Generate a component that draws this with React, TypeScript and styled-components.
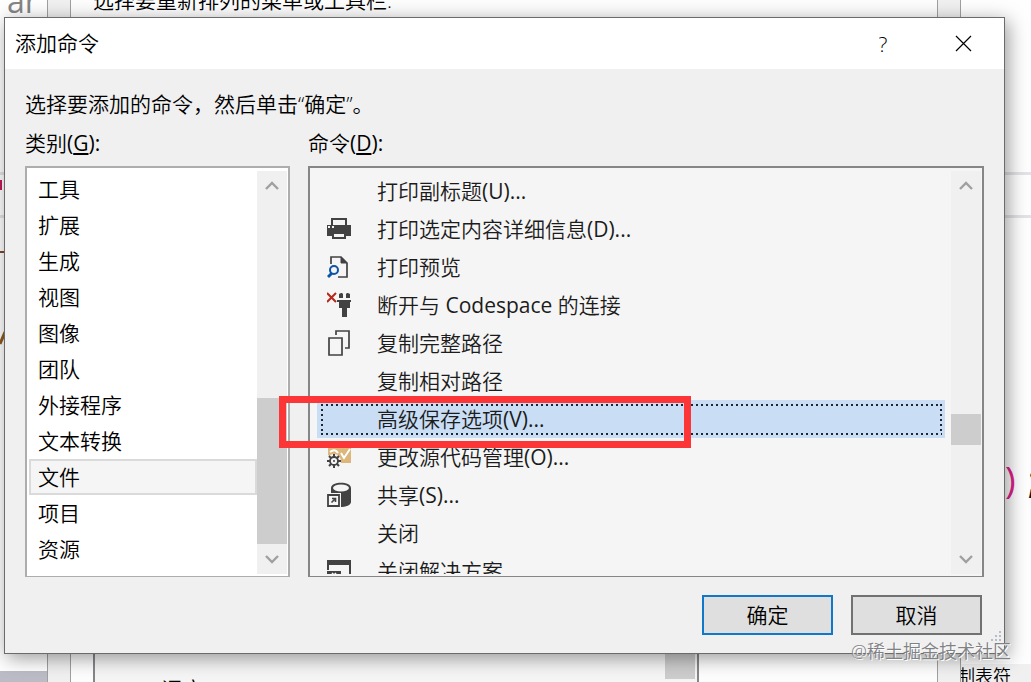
import React from 'react';
import styled, { createGlobalStyle, css } from 'styled-components';

const GlobalStyle = createGlobalStyle`
  *, *::before, *::after { box-sizing: border-box; }
  body {
    margin: 0;
    background: #fefefe;
    color: #000;
    font: 350 21px/28px "Open Sans", "Noto Sans CJK SC", sans-serif;
  }
  ul { list-style: none; margin: 0; padding: 0; }
  p, h1 { margin: 0; font-size: inherit; font-weight: inherit; }
  svg { display: block; }
`;

const Desktop = styled.div`
  position: relative;
  min-height: 100vh;
  padding: 17px 26px 28px 4px;
  overflow: hidden;
`;

/* Windows lying behind the dialog */

const Backdrop = styled.div`
  position: absolute;
  inset: 0;
  display: flex;
`;

const EditorEdge = styled.div<{ $side: 'left' | 'right' }>`
  flex: none;
  display: flex;
  flex-direction: column;
  width: ${(p) => (p.$side === 'left' ? 47 : 70)}px;
  overflow: hidden;
`;

const EditorHeading = styled.p`
  height: 172px;
  padding-left: 7px;
  color: #858585;
  font: 400 32px/2px "Open Sans", sans-serif;
`;

const CurrentLine = styled.div`
  flex: none;
  height: 46px;
  border: solid #e3e3e7;
  border-width: 3px 0;
`;

const CodeMark = styled.div`
  width: 2px;
  height: 10px;
  margin-top: 5px;
  background: #c2185b;
`;

const EditorCode = styled.div`
  flex: 1;
`;

const CodeSliver = styled.svg`
  margin-top: 32px;
`;

const CodeTail = styled(EditorCode)`
  padding: 242px 0 0 44px;
  white-space: nowrap;
  font: 400 36px/40px "Open Sans", sans-serif;
  color: #111;
`;

const Paren = styled.span`
  color: #e0218a;
  margin-right: 12px;
`;

const StatusStrip = styled.div`
  flex: none;
  height: 11px;
  background: #bcbcc6;
`;

const TabText = styled.div`
  flex: none;
  height: 18px;
  background: #f0f0f0;
  line-height: 24px;
  font-size: 18px;
  text-indent: -4px;
  overflow: hidden;
  white-space: nowrap;
`;

const CustomizeWindow = styled.div`
  flex: 1;
  display: flex;
  padding: 0 22px;
  background: #f0f0f0;
  border: solid #a0a0a0;
  border-width: 0 1px;
`;

const CustomizePanel = styled.div`
  flex: 1;
  display: flex;
  flex-direction: column;
  justify-content: space-between;
  padding: 0 0 0 22px;
  background: #fdfdfd;
  border: solid #a0a0a0;
  border-width: 0 1px;
  overflow: hidden;
`;

const CustomizeCaption = styled.p`
  margin-top: -14px;
`;

const CustomizeList = styled.div`
  display: flex;
  justify-content: space-between;
  width: 606px;
  height: 42px;
  background: #f5f5f5;
  border: solid #848688;
  border-width: 0 2px;
  padding-left: 66px;
  overflow: hidden;
`;

const ClippedItem = styled.span`
  padding-top: 35px;
`;

const BackThumb = styled.span`
  width: 30px;
  height: 39px;
  margin-right: 2px;
  background: #cdcdcd;
`;

/* Dialog */

const Dialog = styled.section`
  position: relative;
  background: #f0f0f0;
  border: 1px solid #6b6b6b;
  box-shadow: 3px 4px 18px rgba(0, 0, 0, 0.4);
`;

const TitleBar = styled.header`
  display: flex;
  align-items: center;
  height: 51px;
  padding: 0 1px 0 10px;
  background: #fff;
`;

const Title = styled.h1`
  flex: 1;
  padding-bottom: 2px;
`;

const CaptionButton = styled.button`
  display: flex;
  align-items: center;
  justify-content: center;
  width: 80px;
  height: 51px;
  padding: 0;
  border: 0;
  background: transparent;
  color: #000;
  font: 300 21px/28px "Open Sans", sans-serif;
`;

const Body = styled.div`
  padding: 21px 20px 18px;
`;

const Lists = styled.div`
  display: grid;
  grid-template-columns: 265px 1fr;
  column-gap: 18px;
  margin-top: 11px;
`;

const ListLabel = styled.p`
  margin-bottom: 9px;
`;

const ListBox = styled.div<{ $tone: 'plain' | 'active' }>`
  position: relative;
  display: flex;
  height: 411px;
  padding: 3px 1px 2px 2px;
  border: 2px solid;
  border-bottom-width: 1px;
  ${(p) =>
    p.$tone === 'plain'
      ? css`
          background: #fff;
          border-color: #adadad;
        `
      : css`
          background: #f5f5f5;
          border-color: #848688;
        `}
`;

const Options = styled.ul<{ $inset?: boolean }>`
  flex: 1;
  overflow: hidden;
  padding: ${(p) => (p.$inset ? '1px 6px 0 5px' : '0')};
`;

const CategoryOption = styled.li`
  height: 36px;
  padding-left: 7px;
  line-height: 32px;
  border: 2px solid transparent;

  &[aria-selected='true'] {
    background: #f5f5f5;
    border-color: #dadada;
  }
`;

const dots = '#1d2733 0 2px, transparent 2px 5px';

const CommandOption = styled.li`
  display: grid;
  grid-template-columns: 24px 1fr;
  column-gap: 26px;
  align-items: center;
  height: 38px;
  padding-left: 10px;
  line-height: 38px;
  color: #1c1c1c;

  &[aria-selected='true'] {
    background:
      repeating-linear-gradient(90deg, ${dots}) 4px 4px / calc(100% - 7px) 2px no-repeat,
      repeating-linear-gradient(90deg, ${dots}) 4px 33px / calc(100% - 7px) 2px no-repeat,
      repeating-linear-gradient(180deg, ${dots}) 4px 4px / 2px 30px no-repeat,
      repeating-linear-gradient(180deg, ${dots}) calc(100% - 3px) 4px / 2px 30px no-repeat,
      #c9def5;
  }
`;

const LatinRun = styled.span`
  font-weight: 400;
`;

const Scrollbar = styled.div`
  flex: none;
  display: flex;
  flex-direction: column;
  width: 30px;
  background: #f0f0f0;
`;

const ScrollButton = styled.button`
  display: flex;
  align-items: center;
  justify-content: center;
  height: 30px;
  padding: 0;
  border: 0;
  background: transparent;
`;

const Track = styled.div`
  flex: 1;
  display: flex;
  flex-direction: column;
`;

const Thumb = styled.div`
  flex: none;
  background: #cdcdcd;
`;

const Highlight = styled.div`
  position: absolute;
  left: -31px;
  top: 228px;
  width: 412px;
  height: 52px;
  border: 7px solid #fc3636;
  pointer-events: none;
`;

const Footer = styled.footer`
  display: flex;
  justify-content: flex-end;
  gap: 18px;
  margin-top: 18px;
  padding-right: 2px;
`;

const PushButton = styled.button<{ $primary?: boolean }>`
  width: 131px;
  height: 40px;
  padding: 0;
  border: 2px solid ${(p) => (p.$primary ? '#0f78c8' : '#6f7173')};
  background: #dfdfdf;
  color: #000;
  font: inherit;
`;

const Grip = styled.svg`
  position: absolute;
  right: 3px;
  bottom: 8px;
`;

const Watermark = styled.p`
  position: absolute;
  right: 20px;
  bottom: 18px;
  color: #7f8184;
  font-size: 18px;
  line-height: 26px;
  text-shadow: 1px 1px 0 #fff;
`;

/* Icons */

const PrinterIcon = () => (
  <svg width="24" height="24" viewBox="0 0 24 24" aria-hidden="true">
    <path d="M5 9V2h14v7" fill="none" stroke="#424242" strokeWidth="2" />
    <path d="M0 8h24v11H0z" fill="#424242" />
    <path d="M1 9h2v2H1zM5 9h2v2H5z" fill="#f5f5f5" />
    <path d="M6 16h12v5H6z" fill="#f5f5f5" stroke="#424242" strokeWidth="2" />
  </svg>
);

const PreviewIcon = () => (
  <svg width="24" height="24" viewBox="0 0 24 24" aria-hidden="true">
    <path d="M4 9V2h10l6 6v14h-9" fill="none" stroke="#424242" strokeWidth="1.7" />
    <path d="M14 2v6h6z" fill="#424242" stroke="#424242" />
    <circle cx="7" cy="15" r="4" fill="none" stroke="#0a55a5" strokeWidth="2" />
    <path d="M5 18l-4 4" stroke="#0a55a5" strokeWidth="3" />
  </svg>
);

const DisconnectIcon = () => (
  <svg width="24" height="26" viewBox="0 0 24 26" aria-hidden="true">
    <path d="M0 1l9 9M9 1L0 10" stroke="#b5281c" strokeWidth="2" />
    <path d="M12 6V2l2-1h1l1 1v4zM19 6V2l1-1h1l2 1v4zM10 8h14v2h-1v6h-3v9h-5v-9h-3v-6h-2z" fill="#424242" />
  </svg>
);

const CopyIcon = () => (
  <svg width="24" height="26" viewBox="0 0 24 26" fill="none" stroke="#424242" strokeWidth="1.7" aria-hidden="true">
    <path d="M2 8h13v17H2z" />
    <path d="M9 5V1h13v17h-4" />
  </svg>
);

const SourceControlIcon = () => (
  <svg width="24" height="24" viewBox="0 0 24 24" aria-hidden="true">
    <path d="M1 0h23v18H14l-3-5-7-1-3-2z" fill="#dcb67a" />
    <path d="M14 8l3 5 6-9M3 7q5-4 8 1" fill="none" stroke="#fff" strokeWidth="2" />
    <circle cx="7" cy="16" r="7" fill="#f5f5f5" />
    <circle cx="7" cy="16" r="4" fill="none" stroke="#424242" strokeWidth="1.8" />
    <path
      d="M7 9v3M7 20v3M0 16h3M11 16h3M2 11l2 2M10 19l2 2M12 11l-2 2M4 19l-2 2"
      stroke="#424242"
      strokeWidth="2"
    />
    <circle cx="7" cy="16" r="1" fill="#424242" />
  </svg>
);

const ShareIcon = () => (
  <svg width="24" height="26" viewBox="0 0 24 26" aria-hidden="true">
    <path d="M4 6c0-7 20-7 20 0v14c0 3-5 5-11 5V11H4z" fill="#424242" />
    <ellipse cx="14" cy="6" rx="8" ry="3.5" fill="#f5f5f5" />
    <path d="M0 11h14v14H0z" fill="#f5f5f5" />
    <path d="M1 13h11v11H1z" fill="#f5f5f5" stroke="#424242" strokeWidth="1.8" />
    <path d="M4.5 20.5l4-4M5 16.5h3.5V20" fill="none" stroke="#424242" strokeWidth="1.6" />
  </svg>
);

const CloseSolutionIcon = () => (
  <svg width="24" height="24" viewBox="0 0 24 24" aria-hidden="true">
    <path d="M0 1h24v5H0z" fill="#424242" />
    <path d="M1 2v9M23 2v20h-8" fill="none" stroke="#424242" strokeWidth="2" />
    <path d="M0 12h14v10H0z" fill="#424242" />
    <path d="M5 14l2 2 2-2" fill="none" stroke="#f5f5f5" strokeWidth="1.5" />
  </svg>
);

const CloseIcon = () => (
  <svg width="17" height="17" viewBox="0 0 17 17" aria-hidden="true">
    <path d="M1 1l15 15M16 1L1 16" stroke="#000" strokeWidth="1.2" />
  </svg>
);

const Chevron = ({ down }: { down?: boolean }) => (
  <svg width="14" height="10" viewBox="0 0 14 10" aria-hidden="true">
    <path d={down ? 'M1 2l6 6 6-6' : 'M1 8l6-6 6 6'} fill="none" stroke="#a0a0a0" strokeWidth="2.4" />
  </svg>
);

const categories = [
  '工具', '扩展', '生成', '视图', '图像', '团队', '外接程序', '文本转换', '文件', '项目', '资源',
];

const commands: { name: string; icon?: React.ReactNode }[] = [
  { name: '打印副标题(U)...' },
  { name: '打印选定内容详细信息(D)...', icon: <PrinterIcon /> },
  { name: '打印预览', icon: <PreviewIcon /> },
  { name: '断开与 Codespace 的连接', icon: <DisconnectIcon /> },
  { name: '复制完整路径', icon: <CopyIcon /> },
  { name: '复制相对路径' },
  { name: '高级保存选项(V)...' },
  { name: '更改源代码管理(O)...', icon: <SourceControlIcon /> },
  { name: '共享(S)...', icon: <ShareIcon /> },
  { name: '关闭' },
  { name: '关闭解决方案', icon: <CloseSolutionIcon /> },
];

/* Latin runs are set one weight heavier than the light Chinese text around them. */
const MixedText = ({ text }: { text: string }) => (
  <>
    {text
      .split(/([ -~]+)/)
      .map((part, i) => (i % 2 ? <LatinRun key={i}>{part}</LatinRun> : part))}
  </>
);

const ListScrollbar = ({ before, size }: { before: number; size: number }) => (
  <Scrollbar>
    <ScrollButton aria-label="向上滚动"><Chevron /></ScrollButton>
    <Track>
      <Thumb style={{ marginTop: before, height: size }} />
    </Track>
    <ScrollButton aria-label="向下滚动"><Chevron down /></ScrollButton>
  </Scrollbar>
);

export default function App() {
  return (
    <Desktop>
      <GlobalStyle />
      <Backdrop>
        <EditorEdge $side="left">
          <EditorHeading>ar</EditorHeading>
          <CurrentLine><CodeMark /></CurrentLine>
          <EditorCode>
            <CodeSliver width="5" height="100" viewBox="0 0 5 100" aria-hidden="true">
              <path d="M0 2h5" stroke="#7a4a2a" strokeWidth="2" />
              <path d="M0 94l5-12" stroke="#8a5a20" strokeWidth="3" />
            </CodeSliver>
          </EditorCode>
          <StatusStrip />
        </EditorEdge>
        <CustomizeWindow>
          <CustomizePanel>
            <CustomizeCaption>选择要重新排列的菜单或工具栏:</CustomizeCaption>
            <CustomizeList>
              <ClippedItem>调序</ClippedItem>
              <BackThumb />
            </CustomizeList>
          </CustomizePanel>
        </CustomizeWindow>
        <EditorEdge $side="right">
          <EditorHeading />
          <CurrentLine />
          <CodeTail><Paren>)</Paren>;</CodeTail>
          <TabText>制表符</TabText>
        </EditorEdge>
      </Backdrop>

      <Dialog role="dialog" aria-labelledby="dialog-title">
        <TitleBar>
          <Title id="dialog-title">添加命令</Title>
          <CaptionButton aria-label="帮助">?</CaptionButton>
          <CaptionButton aria-label="关闭"><CloseIcon /></CaptionButton>
        </TitleBar>
        <Body>
          <p>选择要添加的命令，然后单击“确定”。</p>
          <Lists>
            <div>
              <ListLabel id="category-label">
                类别<LatinRun>(<u>G</u>):</LatinRun>
              </ListLabel>
              <ListBox $tone="plain">
                <Options role="listbox" aria-labelledby="category-label">
                  {categories.map((name) => (
                    <CategoryOption key={name} role="option" aria-selected={name === '文件'}>
                      {name}
                    </CategoryOption>
                  ))}
                </Options>
                <ListScrollbar before={197} size={146} />
              </ListBox>
            </div>
            <div>
              <ListLabel id="command-label">
                命令<LatinRun>(<u>D</u>):</LatinRun>
              </ListLabel>
              <ListBox $tone="active">
                <Options $inset role="listbox" aria-labelledby="command-label">
                  {commands.map(({ name, icon }) => (
                    <CommandOption key={name} role="option" aria-selected={name.startsWith('高级')}>
                      <span>{icon}</span>
                      <span><MixedText text={name} /></span>
                    </CommandOption>
                  ))}
                </Options>
                <ListScrollbar before={213} size={31} />
                <Highlight />
              </ListBox>
            </div>
          </Lists>
          <Footer>
            <PushButton $primary>确定</PushButton>
            <PushButton>取消</PushButton>
          </Footer>
        </Body>
        <Grip width="10" height="14" viewBox="0 0 10 14" aria-hidden="true">
          <path d="M8 0h2v2H8zM8 4h2v2H8zM4 4h2v2H4zM8 8h2v2H8zM4 8h2v2H4zM0 8h2v2H0z" fill="#b4bcc8" />
        </Grip>
      </Dialog>
      <Watermark>@稀土掘金技术社区</Watermark>
    </Desktop>
  );
}
